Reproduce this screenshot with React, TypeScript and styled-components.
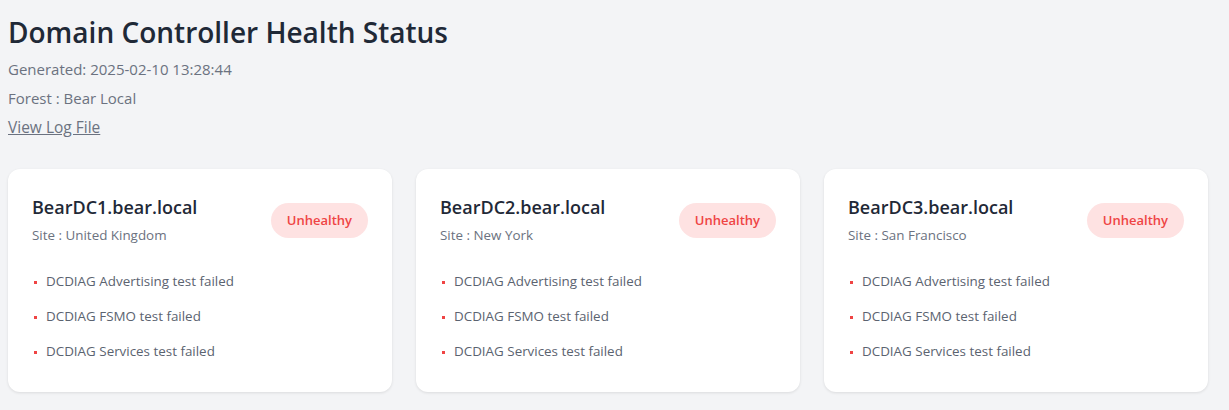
import React from "react";
import styled, { createGlobalStyle } from "styled-components";

type Controller = {
  name: string;
  site: string;
  status: string;
  issues: string[];
};

const controllers: Controller[] = [
  {
    name: "BearDC1.bear.local",
    site: "United Kingdom",
    status: "Unhealthy",
    issues: ["DCDIAG Advertising test failed", "DCDIAG FSMO test failed", "DCDIAG Services test failed"],
  },
  {
    name: "BearDC2.bear.local",
    site: "New York",
    status: "Unhealthy",
    issues: ["DCDIAG Advertising test failed", "DCDIAG FSMO test failed", "DCDIAG Services test failed"],
  },
  {
    name: "BearDC3.bear.local",
    site: "San Francisco",
    status: "Unhealthy",
    issues: ["DCDIAG Advertising test failed", "DCDIAG FSMO test failed", "DCDIAG Services test failed"],
  },
];

const GlobalStyle = createGlobalStyle`
  body {
    margin: 0;
    background: #f3f4f6;
    font-family: "Segoe UI", "Open Sans", "Noto Sans", sans-serif;
    color: #1f2937;
  }
`;

const App: React.FC = () => {
  return (
    <>
      <GlobalStyle />
      <SPage>
        <STitle>Domain Controller Health Status</STitle>
        <SMeta>Generated: 2025-02-10 13:28:44</SMeta>
        <SMeta>Forest : Bear Local</SMeta>
        <SLink href="#">View Log File</SLink>
        <SGrid>
          {controllers.map((dc) => (
            <SCard key={dc.name}>
              <SHeader>
                <div>
                  <SName>{dc.name}</SName>
                  <SSite>Site : {dc.site}</SSite>
                </div>
                <SBadge>{dc.status}</SBadge>
              </SHeader>
              <SList>
                {dc.issues.map((issue) => (
                  <SItem key={issue}>{issue}</SItem>
                ))}
              </SList>
            </SCard>
          ))}
        </SGrid>
      </SPage>
    </>
  );
};

export default App;

const SPage = styled.div`
  max-width: 1200px;
  padding: 15px 8px;
`;
const STitle = styled.h1`
  margin: 0 0 10px;
  font-size: 28px;
  line-height: 34px;
  font-weight: 600;
  color: #1f2937;
`;
const SMeta = styled.p`
  margin: 0 0 9px;
  font-size: 15px;
  line-height: 20px;
  color: #6b7280;
`;
const SLink = styled.a`
  display: block;
  font-size: 15.5px;
  line-height: 20px;
  color: #6b7280;
  text-decoration: underline;
`;
const SGrid = styled.div`
  display: grid;
  grid-template-columns: repeat(3, 1fr);
  gap: 24px;
  margin-top: 32px;
`;
const SCard = styled.div`
  background: #fff;
  border-radius: 12px;
  box-shadow: 0 1px 3px rgba(0, 0, 0, 0.1);
  padding: 24px 24px 23px;
`;
const SHeader = styled.div`
  display: flex;
  justify-content: space-between;
  align-items: flex-start;
  margin-bottom: 19px;
`;
const SName = styled.div`
  font-size: 18px;
  line-height: 28px;
  font-weight: 600;
  color: #1f2937;
`;
const SSite = styled.div`
  margin-top: 4px;
  font-size: 13.4px;
  line-height: 20px;
  color: #6b7280;
`;
const SBadge = styled.span`
  margin-top: 10px;
  padding: 8px 16px;
  border-radius: 9999px;
  background: #fee2e2;
  color: #ef4444;
  font-size: 13px;
  line-height: 19px;
  font-weight: 600;
`;
const SList = styled.ul`
  list-style: none;
  margin: 0;
  padding: 0;
`;
const SItem = styled.li`
  position: relative;
  padding: 8px 0 8px 14px;
  font-size: 13.4px;
  line-height: 19px;
  color: #5b6370;

  &::before {
    content: "";
    position: absolute;
    left: 2px;
    top: 17px;
    width: 3px;
    height: 3px;
    background: #ef4444;
  }
`;
